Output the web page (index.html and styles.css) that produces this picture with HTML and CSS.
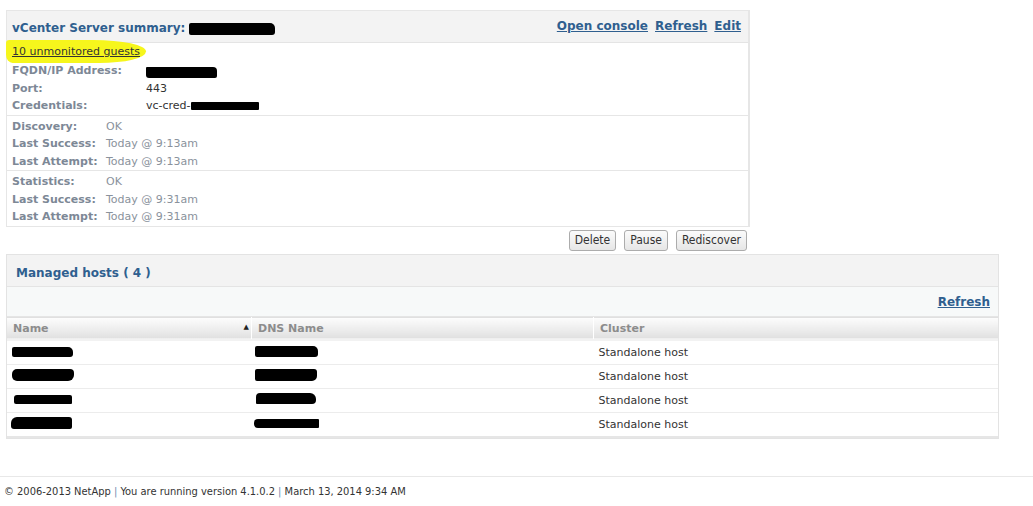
FILE: index.html
```html
<!DOCTYPE html>
<html>
<head>
<meta charset="utf-8">
<title>vCenter Server summary</title>
<link rel="stylesheet" href="styles.css">
</head>
<body>
<div class="page">
  <div class="summary">
    <div class="panel-head">
      <h2 class="title">vCenter Server summary: <span class="redact r-title"></span></h2>
      <div class="links">
        <a href="#">Open console</a>
        <a href="#">Refresh</a>
        <a href="#">Edit</a>
      </div>
    </div>
    <div class="section sec-info">
      <div class="guests-row"><span class="marker"><a href="#" class="guests">10 unmonitored guests</a></span></div>
      <div class="field wide"><span class="label">FQDN/IP Address:</span><span class="value"><span class="redact r-fqdn"></span></span></div>
      <div class="field wide"><span class="label">Port:</span><span class="value">443</span></div>
      <div class="field wide"><span class="label">Credentials:</span><span class="value">vc-cred-<span class="redact r-cred"></span></span></div>
    </div>
    <div class="section">
      <div class="field"><span class="label">Discovery:</span><span class="value muted">OK</span></div>
      <div class="field"><span class="label">Last Success:</span><span class="value muted">Today @ 9:13am</span></div>
      <div class="field"><span class="label">Last Attempt:</span><span class="value muted">Today @ 9:13am</span></div>
    </div>
    <div class="section last">
      <div class="field"><span class="label">Statistics:</span><span class="value muted">OK</span></div>
      <div class="field"><span class="label">Last Success:</span><span class="value muted">Today @ 9:31am</span></div>
      <div class="field"><span class="label">Last Attempt:</span><span class="value muted">Today @ 9:31am</span></div>
    </div>
  </div>
  <div class="buttons">
    <button class="btn">Delete</button>
    <button class="btn">Pause</button>
    <button class="btn">Rediscover</button>
  </div>

  <div class="hosts">
    <div class="panel-head hosts-head">
      <h2 class="title">Managed hosts ( 4 )</h2>
    </div>
    <div class="toolbar"><a href="#">Refresh</a></div>
    <table class="grid">
      <thead>
        <tr>
          <th class="c-name">Name<span class="sort">&#9650;</span></th>
          <th class="c-dns">DNS Name</th>
          <th class="c-cluster">Cluster</th>
        </tr>
      </thead>
      <tbody>
        <tr><td><span class="redact n1"></span></td><td><span class="redact d1"></span></td><td>Standalone host</td></tr>
        <tr><td><span class="redact n2"></span></td><td><span class="redact d2"></span></td><td>Standalone host</td></tr>
        <tr><td><span class="redact n3"></span></td><td><span class="redact d3"></span></td><td>Standalone host</td></tr>
        <tr><td><span class="redact n4"></span></td><td><span class="redact d4"></span></td><td>Standalone host</td></tr>
      </tbody>
    </table>
  </div>
</div>
<div class="footer">&copy; 2006-2013 NetApp <span class="sep">|</span> You are running version 4.1.0.2 <span class="sep">|</span> March 13, 2014 9:34 AM</div>
</body>
</html>
```

FILE: styles.css
```css
html, body {
  margin: 0;
  padding: 0;
  background: #ffffff;
  font-family: "DejaVu Sans", Verdana, sans-serif;
  font-size: 11px;
  color: #333333;
}

.page {
  padding: 10px 0 0 6px;
}

.summary {
  width: 741px;
  border: 1px solid #e6e6e6;
  border-right: 2px solid #e6e6e6;
  background: #ffffff;
}

.panel-head {
  height: 31px;
  background: #f3f3f3;
  border-bottom: 1px solid #e4e4e4;
  display: flex;
  align-items: center;
  justify-content: space-between;
  padding: 0 7px 0 5px;
}

.title {
  margin: 0;
  font-size: 12px;
  font-weight: bold;
  color: #2f5f8f;
  display: flex;
  align-items: center;
  gap: 4px;
  padding-top: 2px;
}

.links {
  display: flex;
  gap: 7px;
  padding-bottom: 2px;
}

.links a, .toolbar a {
  font-size: 12px;
  font-weight: bold;
  color: #2f5f8f;
  text-decoration: underline;
}

.redact {
  display: inline-block;
  background: #000000;
  border-radius: 2px 5px 3px 2px;
}

.r-title {
  width: 86px;
  height: 12px;
  margin-top: 2px;
}

.r-fqdn {
  width: 71px;
  height: 11px;
  border-radius: 1px 4px 2px 3px;
  vertical-align: -4px;
}

.r-cred {
  width: 68px;
  height: 8px;
  vertical-align: -1px;
  border-radius: 1px;
}

.section {
  border-bottom: 1px solid #e6e6e6;
  padding: 2px 5px 0 5px;
}

.section.last {
  border-bottom: none;
  padding-bottom: 0;
}

.sec-info {
  padding-top: 0;
}

.guests-row {
  height: 19px;
  display: flex;
  align-items: center;
}

.marker {
  background: #f6f61c;
  border-radius: 4px 45% 40% 8px / 4px 60% 60% 10px;
  padding: 5px 6px 5px 6px;
  margin: -3px 0 0 -6px;
  line-height: 13px;
}

.guests {
  color: #333333;
  text-decoration: underline;
}

.field {
  display: flex;
  height: 17.5px;
  line-height: 17.5px;
}

.label {
  width: 94px;
  flex: none;
  color: #7d8896;
  font-weight: bold;
}

.field.wide .label {
  width: 134px;
}

.value {
  color: #333333;
}

.value.muted {
  color: #8a929c;
}

.buttons {
  width: 743px;
  display: flex;
  justify-content: flex-end;
  gap: 8px;
  padding-top: 3px;
  height: 21px;
}

.btn {
  font-family: "DejaVu Sans Condensed", "Liberation Sans", sans-serif;
  font-size: 12px;
  color: #333333;
  height: 21px;
  padding: 0 5px;
  border: 1px solid #acacac;
  border-radius: 3px;
  background: linear-gradient(#fbfbfb, #e6e6e6);
}

.btn:last-child {
  margin-right: 2px;
}

.hosts {
  width: 991px;
  margin-top: 3px;
  border: 1px solid #e3e3e3;
  background: #ffffff;
}

.hosts-head {
  padding-left: 9px;
}

.hosts-head .title {
  padding-top: 5px;
}

.toolbar {
  height: 30px;
  background: #f7f9f9;
  border-bottom: 1px solid #e5e5e5;
  display: flex;
  align-items: center;
  justify-content: flex-end;
  padding-right: 8px;
  padding-top: 2px;
  box-sizing: border-box;
}

.grid {
  width: 100%;
  border-collapse: collapse;
  border-top: 1px solid #e0e0e0;
}

.grid th {
  height: 21px;
  padding: 0 0 0 6px;
  text-align: left;
  font-weight: bold;
  color: #8c8c8c;
  background: linear-gradient(#fdfdfd, #ececec 60%, #e0e0e0);
  border-bottom: 2px solid #f2f2f2;
  border-left: 1px solid #ffffff;
  white-space: nowrap;
}

.grid th:first-child {
  border-left: none;
}

.c-name {
  width: 238px;
  position: relative;
}

.c-dns {
  width: 335px;
}

.sort {
  position: absolute;
  right: 2px;
  top: 5px;
  font-size: 7px;
  color: #222222;
}

.grid td {
  height: 23px;
  padding: 0 0 0 5px;
  border-bottom: 1px solid #ececec;
  color: #333333;
  vertical-align: middle;
}

.grid tr:last-child td {
  border-bottom: 2px solid #e6e6e6;
}

.n1 { width: 61px; height: 10px; margin-top: 3px; }
.n2 { width: 62px; height: 12px; border-radius: 5px 4px 6px 5px; margin-left: 0; }
.n3 { width: 58px; height: 9px; border-radius: 3px 2px 1px 2px; margin-left: 2px; }
.n4 { width: 61px; height: 12px; border-radius: 6px 3px 2px 3px; margin-left: -1px; }
.d1 { width: 63px; height: 11px; margin-left: -2px; margin-top: 2px; }
.d2 { width: 62px; height: 12px; border-radius: 2px 3px 5px 2px; margin-left: -2px; }
.d3 { width: 60px; height: 11px; border-radius: 4px 6px 4px 1px; margin-left: -1px; }
.d4 { width: 65px; height: 9px; border-radius: 4px 1px 1px 4px; margin-left: -3px; }

.footer {
  margin-top: 37px;
  border-top: 1px solid #e8e8e8;
  padding: 8px 0 0 4px;
  font-family: "DejaVu Sans Condensed", "Liberation Sans", sans-serif;
  font-size: 11px;
  color: #333333;
}

.footer .sep {
  color: #6f8fb0;
}
```
